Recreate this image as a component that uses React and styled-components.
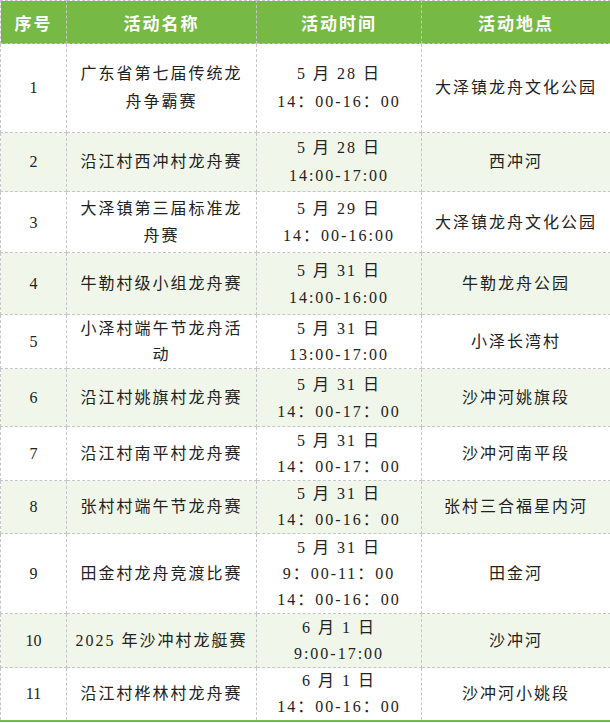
import React from "react";
import styled, { createGlobalStyle } from "styled-components";

const GlobalStyle = createGlobalStyle`
  body {
    margin: 0;
    background: #fff;
  }
`;

const colors = {
  green: "#76b944",
  light: "#f0f7ea",
  line: "#c6c6c6",
  text: "#222",
};

const Table = styled.table`
  width: 610px;
  border-collapse: collapse;
  table-layout: fixed;
  font-family: "Liberation Serif", "Noto Sans CJK SC", serif;
  font-size: 16px;
  color: ${colors.text};
  border-bottom: 2px solid ${colors.green};
`;

const HeadRow = styled.tr`
  height: 43px;
  background: ${colors.green};
`;

const HeadCell = styled.th`
  border: 1px dashed ${colors.line};
  color: #fff;
  font-weight: bold;
  font-size: 17px;
  letter-spacing: 2px;
  padding: 0;
  text-align: center;
`;

const Row = styled.tr`
  height: ${(p) => p.$h}px;
  background: ${(p) => (p.$alt ? colors.light : "#fff")};
`;

const Cell = styled.td`
  border: 1px dashed ${colors.line};
  padding: 0 7px;
  text-align: center;
  vertical-align: middle;
  line-height: ${(p) => p.$lh || 26}px;
  letter-spacing: 2px;
`;

const NumCell = styled(Cell)`
  letter-spacing: 0;
  padding: 0;
`;

const Line = styled.div`
  white-space: nowrap;
`;

const rows = [
  { n: 1, name: "广东省第七届传统龙舟争霸赛", time: ["5 月 28 日", "14：00-16：00"], place: "大泽镇龙舟文化公园", h: 89, lh: 28 },
  { n: 2, name: "沿江村西冲村龙舟赛", time: ["5 月 28 日", "14:00-17:00"], place: "西冲河", h: 59, lh: 28 },
  { n: 3, name: "大泽镇第三届标准龙舟赛", time: ["5 月 29 日", "14：00-16:00"], place: "大泽镇龙舟文化公园", h: 61, lh: 27 },
  { n: 4, name: "牛勒村级小组龙舟赛", time: ["5 月 31 日", "14:00-16:00"], place: "牛勒龙舟公园", h: 62, lh: 27 },
  { n: 5, name: "小泽村端午节龙舟活动", time: ["5 月 31 日", "13:00-17:00"], place: "小泽长湾村", h: 54 },
  { n: 6, name: "沿江村姚旗村龙舟赛", time: ["5 月 31 日", "14：00-17：00"], place: "沙冲河姚旗段", h: 58, lh: 27 },
  { n: 7, name: "沿江村南平村龙舟赛", time: ["5 月 31 日", "14：00-17：00"], place: "沙冲河南平段", h: 54 },
  { n: 8, name: "张村村端午节龙舟赛", time: ["5 月 31 日", "14：00-16：00"], place: "张村三合福星内河", h: 53 },
  { n: 9, name: "田金村龙舟竞渡比赛", time: ["5 月 31 日", "9：00-11：00", "14：00-16：00"], place: "田金河", h: 80 },
  { n: 10, name: "2025 年沙冲村龙艇赛", time: ["6 月 1 日", "9:00-17:00"], place: "沙冲河", h: 54 },
  { n: 11, name: "沿江村桦林村龙舟赛", time: ["6 月 1 日", "14：00-16：00"], place: "沙冲河小姚段", h: 53 },
];

const App = () => {
  return (
    <>
      <GlobalStyle />
      <Table>
        <colgroup>
          <col style={{ width: 66 }} />
          <col style={{ width: 190 }} />
          <col style={{ width: 165 }} />
          <col style={{ width: 189 }} />
        </colgroup>
        <thead>
          <HeadRow>
            <HeadCell>序号</HeadCell>
            <HeadCell>活动名称</HeadCell>
            <HeadCell>活动时间</HeadCell>
            <HeadCell>活动地点</HeadCell>
          </HeadRow>
        </thead>
        <tbody>
          {rows.map((r, i) => (
            <Row key={r.n} $h={r.h} $alt={i % 2 === 1}>
              <NumCell $lh={r.lh}>{r.n}</NumCell>
              <Cell $lh={r.lh}>{r.name}</Cell>
              <Cell $lh={r.lh}>
                {r.time.map((t) => (
                  <Line key={t}>{t}</Line>
                ))}
              </Cell>
              <Cell $lh={r.lh}>{r.place}</Cell>
            </Row>
          ))}
        </tbody>
      </Table>
    </>
  );
};

export default App;
